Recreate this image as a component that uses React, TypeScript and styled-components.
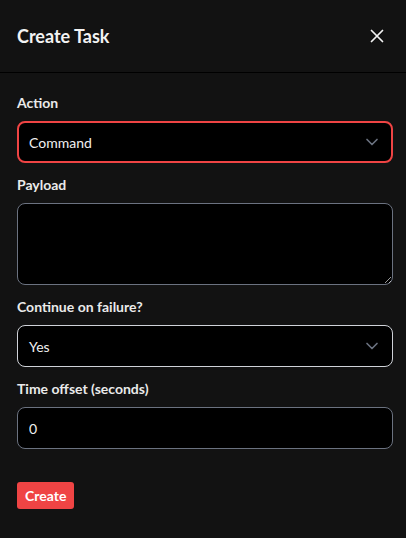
import { createGlobalStyle } from 'styled-components'
import styled from 'styled-components'

const GlobalStyle = createGlobalStyle`
  html, body {
    margin: 0;
    padding: 0;
    background: #121212;
  }
  body {
    font-family: 'Lato', 'Noto Sans', sans-serif;
    color: #f5f5f5;
  }
`

const Panel = styled.div`
  width: 406px;
  height: 538px;
  background: #121212;
  display: flex;
  flex-direction: column;
  box-sizing: border-box;
`

const Header = styled.div`
  height: 73px;
  flex-shrink: 0;
  display: flex;
  align-items: center;
  justify-content: space-between;
  padding: 0 17px 0 17px;
  border-bottom: 1px solid #000;
  box-sizing: border-box;
`

const Title = styled.h2`
  margin: 0;
  font-size: 18px;
  font-weight: 700;
  color: #f3f3f3;
`

const CloseButton = styled.button`
  background: none;
  border: none;
  padding: 0;
  width: 24px;
  height: 24px;
  display: flex;
  align-items: center;
  justify-content: center;
  color: #f3f3f3;
  cursor: pointer;
`

const Body = styled.form`
  display: flex;
  flex-direction: column;
  padding: 20px 13px 0 17px;
`

const Field = styled.div`
  display: flex;
  flex-direction: column;
  gap: 8px;
  margin-bottom: 12px;
`

const Label = styled.label`
  font-size: 14px;
  font-weight: 700;
  line-height: 20px;
  color: #eaeaea;
`

const SelectBox = styled.div<{ $active?: boolean }>`
  height: 42px;
  box-sizing: border-box;
  display: flex;
  align-items: center;
  justify-content: space-between;
  padding: 0 ${(p) => (p.$active ? '9px' : '10px')} 0 ${(p) => (p.$active ? '10px' : '11px')};
  background: #000;
  border-radius: 8px;
  border: ${(p) => (p.$active ? '2px solid #ef4444' : '1px solid #cfd2d8')};
  font-size: 14px;
  color: #f0f0f0;
`

const TextArea = styled.textarea`
  height: 82px;
  box-sizing: border-box;
  background: #000;
  border: 1px solid #6b7280;
  border-radius: 8px;
  resize: vertical;
  color: #f0f0f0;
  font: inherit;
  font-size: 14px;
  padding: 8px 11px;
  outline: none;
`

const Input = styled.input`
  height: 42px;
  box-sizing: border-box;
  background: #000;
  border: 1px solid #6b7280;
  border-radius: 8px;
  color: #f0f0f0;
  font: inherit;
  font-size: 14px;
  padding: 0 11px;
  outline: none;
`

const Footer = styled.div`
  padding-top: 21px;
`

const PrimaryButton = styled.button`
  height: 27px;
  padding: 0 8px;
  border: none;
  border-radius: 3px;
  background: #ef4444;
  color: #fff;
  font: inherit;
  font-size: 14px;
  font-weight: 700;
  cursor: pointer;
`

const Chevron = () => (
  <svg width="20" height="20" viewBox="0 0 24 24" fill="none" stroke="#6b7280" strokeWidth="2" strokeLinecap="round" strokeLinejoin="round">
    <path d="m6 9 6 6 6-6" />
  </svg>
)

export default function App() {
  return (
    <>
      <GlobalStyle />
      <Panel>
        <Header>
          <Title>Create Task</Title>
          <CloseButton aria-label="Close">
            <svg width="22" height="22" viewBox="0 0 24 24" fill="none" stroke="currentColor" strokeWidth="1.9" strokeLinecap="round">
              <path d="M18 6 6 18M6 6l12 12" />
            </svg>
          </CloseButton>
        </Header>
        <Body onSubmit={(e) => e.preventDefault()}>
          <Field>
            <Label>Action</Label>
            <SelectBox $active>
              <span>Command</span>
              <Chevron />
            </SelectBox>
          </Field>
          <Field>
            <Label>Payload</Label>
            <TextArea />
          </Field>
          <Field>
            <Label>Continue on failure?</Label>
            <SelectBox>
              <span>Yes</span>
              <Chevron />
            </SelectBox>
          </Field>
          <Field>
            <Label>Time offset (seconds)</Label>
            <Input defaultValue="0" />
          </Field>
          <Footer>
            <PrimaryButton type="submit">Create</PrimaryButton>
          </Footer>
        </Body>
      </Panel>
    </>
  )
}
